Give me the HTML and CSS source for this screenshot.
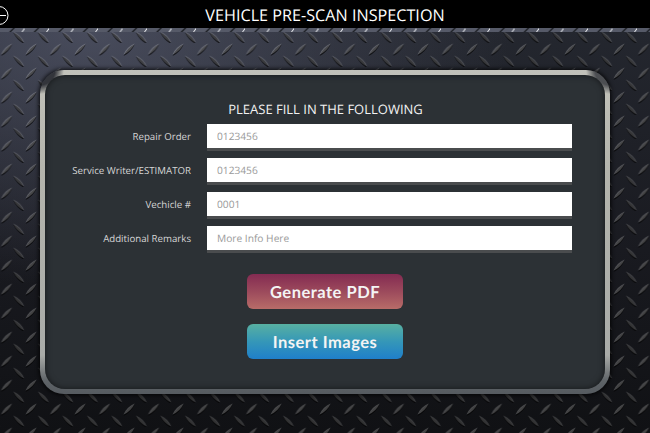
FILE: index.html
```html
<!DOCTYPE html>
<html lang="en">
<head>
    <meta charset="UTF-8">
    <meta name="viewport" content="width=device-width, initial-scale=1.0">
    <title>Vehicle Pre-Scan Inspection</title>
    <link rel="stylesheet" href="styles.css">
</head>
<body>
    <header class="top-bar">
        <svg class="back-icon" width="10" height="28" viewBox="0 0 10 28">
            <circle cx="-1" cy="15.5" r="9" fill="none" stroke="#fff" stroke-width="1"/>
            <path d="M0 15.5H6" stroke="#fff" stroke-width="1"/>
        </svg>
        <h1>VEHICLE PRE-SCAN INSPECTION</h1>
    </header>

    <main class="plate">
        <svg class="plate-texture" width="650" height="405">
            <defs>
                <pattern id="tread" width="24.5" height="24" patternUnits="userSpaceOnUse" patternTransform="translate(.6 15)">
                    <path d="M.5 13Q4.5 4.5 11.5 1.5Q8 9.5.5 13Z" fill="#000" fill-opacity=".7"/>
                    <path d="M.5 11.5Q3.8 3.8 11.5.5Q8.2 8.2.5 11.5Z" fill="#fff" fill-opacity=".24"/>
                    <path d="M12.8 13.5Q20 16.5 23.8 25Q16.5 21.5 12.8 13.5Z" fill="#000" fill-opacity=".7"/>
                    <path d="M12.8 12.5Q20.5 15.8 23.8 23.5Q16 20.2 12.8 12.5Z" fill="#fff" fill-opacity=".18"/>
                </pattern>
                <pattern id="edge" width="24.5" height="4" patternUnits="userSpaceOnUse">
                    <path d="M9 4L13 0H15L11 4Z" fill="#15171c" fill-opacity=".9"/>
                    <path d="M22 4L25 0" stroke="#e4e6ea" stroke-width="1"/>
                </pattern>
            </defs>
            <rect width="650" height="405" fill="url(#tread)"/>
            <rect width="650" height="4" fill="#565a68"/>
            <rect width="650" height="4" fill="url(#edge)"/>
        </svg>

        <section class="panel">
            <div class="panel-inner">
                <h2>PLEASE FILL IN THE FOLLOWING</h2>
                <form class="scan-form">
                    <label class="form-row">
                        <span>Repair Order</span>
                        <input type="text" placeholder="0123456">
                    </label>
                    <label class="form-row">
                        <span>Service Writer/ESTIMATOR</span>
                        <input type="text" placeholder="0123456">
                    </label>
                    <label class="form-row">
                        <span>Vechicle #</span>
                        <input type="text" placeholder="0001">
                    </label>
                    <label class="form-row">
                        <span>Additional Remarks</span>
                        <input type="text" placeholder="More Info Here">
                    </label>
                    <div class="actions">
                        <button type="button" class="btn btn-pdf">Generate PDF</button>
                        <button type="button" class="btn btn-images">Insert Images</button>
                    </div>
                </form>
            </div>
        </section>
    </main>
</body>
</html>
```
FILE: styles.css
```css
* {
    margin: 0;
    padding: 0;
    box-sizing: border-box;
    font-family: 'Open Sans', sans-serif;
    text-rendering: geometricPrecision;
}

html,
body {
    width: 650px;
    height: 433px;
    overflow: hidden;
    background-color: #000;
}

.top-bar {
    height: 28px;
    background-color: #000;
    display: flex;
    justify-content: center;
    align-items: center;
    position: relative;
}

.back-icon {
    position: absolute;
    left: 0;
    top: 0;
}

.top-bar h1 {
    font-size: 16.2px;
    font-weight: 400;
    color: #fff;
    padding-top: 2px;
}

.plate {
    height: 405px;
    position: relative;
    padding: 42px 40px 0;
    background:
        radial-gradient(ellipse 420px 260px at 90px 0, rgba(88, 92, 112, 0.7), rgba(60, 62, 78, 0) 100%),
        linear-gradient(#24272f 0, #191a20 55%, #101114 100%);
}

.plate-texture {
    position: absolute;
    top: 0;
    left: 0;
}

.panel {
    position: relative;
    width: 570px;
    height: 324px;
    padding: 5px;
    border-radius: 24px;
    background:
        radial-gradient(circle at 0 0, #33353b 15px, rgba(51, 53, 59, 0) 24px),
        radial-gradient(circle at 100% 0, #4c4e52 15px, rgba(76, 78, 82, 0) 24px),
        linear-gradient(#c2c2ba 0, #b4b4ac 30%, #a9aba8 88%, #5e6367 96%, #565b60 100%);
    box-shadow: 0 0 4px 1px rgba(0, 0, 0, 0.85);
}

.panel-inner {
    height: 100%;
    border-radius: 20px;
    background-color: #2c3135;
    box-shadow: inset 0 0 6px rgba(0, 0, 0, 0.55);
    padding-top: 25px;
}

.panel-inner h2 {
    font-size: 13px;
    font-weight: 400;
    line-height: 18px;
    color: #f2f2f2;
    text-align: center;
    margin-bottom: 6px;
    padding-left: 1px;
}

.scan-form {
    display: flex;
    flex-direction: column;
    gap: 7px;
}

.form-row {
    display: flex;
    align-items: flex-start;
    gap: 16px;
}

.form-row span {
    width: 146px;
    font-size: 9.7px;
    line-height: 26px;
    color: #d6d6d6;
    text-align: right;
}

.form-row input {
    width: 365px;
    height: 27px;
    padding: 0 10px;
    font-size: 10.2px;
    border: none;
    border-bottom: 3px solid #4a4c4e;
    border-radius: 0;
    outline: none;
    background-color: #fff;
}

.form-row input::placeholder {
    color: #9a9a9a;
}

.actions {
    display: flex;
    flex-direction: column;
    align-items: center;
    gap: 15px;
    margin-top: 14px;
}

.btn {
    width: 156px;
    height: 35px;
    border: none;
    border-radius: 6px;
    font-family: 'Lato', sans-serif;
    font-size: 16.5px;
    font-weight: 700;
    letter-spacing: 0.5px;
    color: #f4f4f4;
    cursor: pointer;
}

.btn-pdf {
    background: linear-gradient(#842b52 0, #9c4a5c 50%, #b86c68 100%);
}

.btn-images {
    background: linear-gradient(#58b0a2 0, #3597b8 50%, #1f7fca 100%);
}
```
